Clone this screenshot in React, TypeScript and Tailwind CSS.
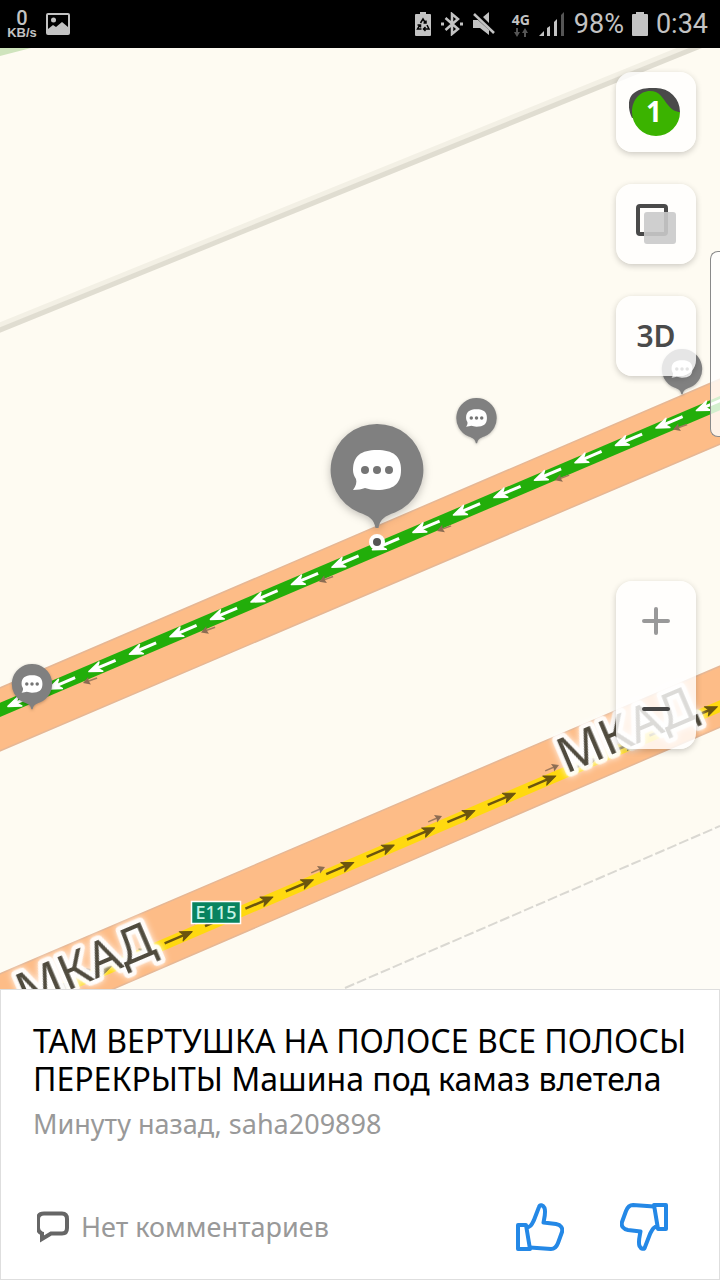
import type { ReactNode } from "react";

const range = (from: number, to: number) =>
  Array.from({ length: to - from + 1 }, (_, i) => from + i);

interface PinProps {
  x: number;
  y: number;
  scale?: number;
}

function Pin({ x, y, scale = 1 }: PinProps) {
  return (
    <g
      transform={`translate(${x} ${y}) scale(${scale})`}
      className="drop-shadow-[0_2px_4px_rgba(0,0,0,0.25)]"
    >
      <path
        d="M0 -46A46 46 0 0 1 18 42.500C8 46 3 49 1.500 58H-1.500C-3 49 -8 46 -18 42.500A46 46 0 0 1 0 -46Z"
        fill="#808080"
      />
      <path
        d="M0 -20C16 -20 24 -14 24 0S16 20 0 20C-5 20 -8 19 -12 18C-15 19 -19 20 -24 20C-21 16 -20 12 -21 9C-23 6 -24 3 -24 0C-24 -14 -16 -20 0 -20Z"
        fill="#fff"
      />
      <g fill="#757575">
        <circle cx="-12" cy="0" r="4" />
        <circle cx="0" cy="0" r="4" />
        <circle cx="12" cy="0" r="4" />
      </g>
    </g>
  );
}

function RoadName({ x, y }: { x: number; y: number }) {
  return (
    <text
      transform={`translate(${x} ${y}) rotate(-23)`}
      className="font-['Noto_Sans',sans-serif] text-[50px] drop-shadow-[0_0_3px_#fff]"
      fill="#504b3e"
      stroke="#fff"
      strokeOpacity="0.85"
      strokeWidth="9"
      strokeLinejoin="round"
      paintOrder="stroke"
    >
      МКАД
    </text>
  );
}

function MapCanvas() {
  return (
    <svg
      viewBox="0 48 720 941"
      preserveAspectRatio="xMidYMid slice"
      className="absolute inset-0 h-full w-full"
    >
      <path d="M0 48H31L0 56Z" fill="#cfe4bd" />
      <path d="M-5 327L725 31" stroke="#f3f0e5" strokeWidth="5" />
      <path d="M-5 332L725 36" stroke="#e0ddd1" strokeWidth="5" />

      {/* dashed boundary */}
      <path d="M345 988L720 826V989H345Z" fill="#fefcf6" />
      <path d="M345 988L720 826" stroke="#dad8d2" strokeWidth="2" strokeDasharray="10 3" />

      {/* upper carriageway */}
      <path d="M-5 690L725 377V442L-5 753Z" fill="#fdbc87" stroke="#e6b795" strokeWidth="1.500" />
      <path d="M-5 712L725 401" stroke="#22ae0a" strokeWidth="13" />
      {range(-12, 5).map((k) => (
        <g
          key={k}
          transform={`translate(${493 + k * 40.5} ${498 - k * 17.4}) rotate(-23)`}
          stroke="#fff"
          fill="none"
        >
          <path d="M6 0H30" strokeWidth="3" />
          <path d="M1 0L14 -5L10 0L14 5Z" fill="#fff" strokeWidth="1.500" strokeLinejoin="round" />
        </g>
      ))}
      {range(-3, 2).map((k) => (
        <g key={k} transform={`translate(${437 + k * 118} ${531 - k * 50.7}) rotate(-20)`}>
          <path d="M4 0H15" stroke="#a07a5c" strokeWidth="1.500" />
          <path d="M0 0L7 -4L6 0L7 4Z" fill="#8c6c52" />
        </g>
      ))}

      {/* lower carriageway */}
      <path d="M-5 976L725 664V725L-5 1040Z" fill="#fdbc87" stroke="#e6b795" strokeWidth="1.500" />
      <path d="M-5 1017L725 704" stroke="#ffd90f" strokeWidth="11" />
      {range(-5, 11).map((k) => (
        <g
          key={k}
          transform={`translate(${273 + k * 40.4} ${897 - k * 17.3}) rotate(-23)`}
          stroke="#6b550f"
        >
          <path d="M-30 0H-4" strokeWidth="2.500" />
          <path d="M0 0L-12 -5L-9 0L-12 5Z" fill="#6b550f" strokeLinejoin="round" />
        </g>
      ))}
      {range(-2, 2).map((k) => (
        <g key={k} transform={`translate(${325 + k * 117} ${867 - k * 51}) rotate(-23)`}>
          <path d="M-15 0H-4" stroke="#a07a5c" strokeWidth="1.500" />
          <path d="M0 0L-7 -4L-6 0L-7 4Z" fill="#8c6c52" />
        </g>
      ))}

      <RoadName x={25} y={1009} />
      <RoadName x={566} y={774} />

      <rect x="191.500" y="901.500" width="49" height="22" fill="#08835f" stroke="#fff" strokeWidth="1.500" />
      <text
        x="216"
        y="919"
        textAnchor="middle"
        fill="#c5f3e4"
        className="font-['Noto_Sans',sans-serif] text-[18px] font-medium"
      >
        E115
      </text>

      <circle cx="377" cy="542" r="6" fill="#555" stroke="#fff" strokeWidth="4" />
      <Pin x={377} y={470} />
      <Pin x={476.5} y={418} scale={0.435} />
      <Pin x={32} y={684} scale={0.435} />
      <Pin x={682} y={369} scale={0.435} />
    </svg>
  );
}

function MapButton({ label, children }: { label: string; children: ReactNode }) {
  return (
    <button
      aria-label={label}
      className="grid size-20 place-items-center rounded-2xl bg-white/80 shadow-[0_2px_6px_rgba(0,0,0,0.2)]"
    >
      {children}
    </button>
  );
}

function StatusBar() {
  return (
    <header className="flex h-12 items-center justify-between bg-black px-2 text-[#c3c3c3]">
      <div className="flex items-center gap-2.5">
        <div className="flex w-7 flex-col items-center font-['Liberation_Sans',sans-serif] font-bold">
          <span className="font-[Roboto,sans-serif] text-xl leading-[18px] font-medium">0</span>
          <span className="text-[13px] leading-3">KB/s</span>
        </div>
        <svg viewBox="0 0 24 22" className="h-[22px] w-6">
          <rect x="1" y="1" width="22" height="20" rx="1" fill="none" stroke="currentColor" strokeWidth="2" />
          <circle cx="7.500" cy="7" r="2.500" fill="currentColor" />
          <path d="M2 16L7 12L10 14L16 9L22 14V21H2Z" fill="currentColor" />
        </svg>
      </div>

      <div className="flex items-center font-[Roboto,sans-serif] text-[27px] leading-8">
        {/* battery saver */}
        <svg viewBox="0 0 16 24" className="mr-2.5 h-6 w-4">
          <path d="M5 0H11V2H15Q16 2 16 3V23Q16 24 15 24H1Q0 24 0 23V3Q0 2 1 2H5Z" fill="currentColor" />
          <g fill="none" stroke="#000" strokeWidth="1.500">
            <path d="M5.500 11L8 7L10.500 11M8.500 11H11V8.500" />
            <path d="M12 13L14 17H9M10.500 15L8.500 17L10.500 19" />
            <path d="M6.500 17H2.500L5 12.500M2.500 13H5.500V15.500" />
          </g>
        </svg>
        {/* bluetooth */}
        <svg viewBox="0 0 22 24" className="mr-2.5 h-6 w-[22px]" fill="none" stroke="currentColor" strokeWidth="2.500">
          <path d="M4.500 6L17 17L11 22V2L17 7L4.500 18" />
          <path d="M0 12H3M19 12H22" strokeWidth="3" />
        </svg>
        {/* sound off */}
        <svg viewBox="0 0 22 24" className="mr-4 h-6 w-[22px]">
          <path d="M0 8H5L16 18V23L7 16H0ZM10 5L16 0V11Z" fill="currentColor" />
          <path d="M1 2L21 21" stroke="currentColor" strokeWidth="2.500" />
        </svg>
        <div className="mr-2 flex w-5 flex-col items-center">
          <span className="font-['Open_Sans',sans-serif] text-sm leading-4 font-bold">4G</span>
          <svg viewBox="0 0 14 9" className="h-[9px] w-3.5" fill="#555">
            <path d="M2 0H4V4H6L3 9L0 4H2Z" />
            <path d="M10 9H12V5H14L11 0L8 5H10Z" />
          </svg>
        </div>
        <svg viewBox="0 0 25 24" className="mr-2.5 h-6 w-[25px]" fill="currentColor">
          <path d="M0 24L5 19V24Z" />
          <path d="M8 16L11 14V24H8Z" />
          <path d="M15 10L18 7V24H15Z" />
          <path d="M22 3L25 0V24H22Z" fill="#555" />
        </svg>
        <span className="mr-2">98%</span>
        <svg viewBox="0 0 16 24" className="mr-2 h-6 w-4">
          <path d="M4 0H12V2H15Q16 2 16 3V23Q16 24 15 24H1Q0 24 0 23V3Q0 2 1 2H4Z" fill="currentColor" />
        </svg>
        <span className="mr-1">0:34</span>
      </div>
    </header>
  );
}

function ThumbIcon({ className = "" }: { className?: string }) {
  return (
    <svg
      viewBox="0 0 48 48"
      className={`size-12 ${className}`}
      fill="none"
      stroke="#2488e6"
      strokeWidth="4"
      strokeLinejoin="round"
    >
      <path d="M2 22H10L14 46H2Z" />
      <path d="M10 24.500C15 24.500 16 21 18 17L23 4C24 1 27 2 28.500 5C30 9 28.500 14 27.500 19.500L40 21C45 22 47 25 46 29L42 40C40.500 44 39 46 35 46L14 44.500" />
    </svg>
  );
}

export default function App() {
  return (
    <div className="flex min-h-screen flex-col bg-white font-['Noto_Sans',sans-serif]">
      <StatusBar />

      <main className="relative min-h-160 flex-1 overflow-hidden bg-[#fefbf2]">
        <MapCanvas />

        <div className="absolute top-6 right-6 flex flex-col gap-8">
          <MapButton label="Пробки">
            <svg viewBox="629 86 54 52" className="h-[52px] w-[54px]">
              <path
                d="M632 118C628 110 627 98 634 93C642 87 650 88 656 88A24 24 0 0 1 680 112Z"
                fill="#4a4a4a"
              />
              <path
                d="M680 112A24 24 0 0 1 632 112C632 100 640 91 650 91C660 91 663 99 668 105C672 110 676 112 680 112Z"
                fill="#3bb300"
              />
              <text x="654" y="122" textAnchor="middle" fill="#fff" className="text-[28px] font-bold">
                1
              </text>
            </svg>
          </MapButton>
          <MapButton label="Слои">
            <svg viewBox="0 0 40 40" className="size-10">
              <rect x="2" y="2" width="28" height="28" rx="2" fill="none" stroke="#4a4a4a" strokeWidth="4" />
              <rect x="8" y="8" width="32" height="32" rx="3" fill="#cacaca" fillOpacity="0.9" />
            </svg>
          </MapButton>
          <MapButton label="3D">
            <span className="text-[30px] leading-10 font-semibold text-[#4a4a4a]">3D</span>
          </MapButton>
        </div>

        {/* edge panel handle */}
        <div className="absolute top-[203px] right-0 h-[186px] w-2.5 rounded-l-lg border border-r-0 border-[#8a8a8a] bg-white/80" />

        <div className="absolute right-6 bottom-60 flex h-42 w-20 flex-col justify-between rounded-2xl bg-white/80 shadow-[0_2px_6px_rgba(0,0,0,0.2)]">
          <button aria-label="Приблизить" className="grid size-20 place-items-center">
            <svg viewBox="0 0 28 28" className="size-7" stroke="#999" strokeWidth="4" strokeLinecap="round">
              <path d="M2 14H26M14 2V26" />
            </svg>
          </button>
          <button aria-label="Отдалить" className="grid size-20 place-items-center">
            <svg viewBox="0 0 28 28" className="size-7" stroke="#454545" strokeWidth="4" strokeLinecap="round">
              <path d="M2 14H26" />
            </svg>
          </button>
        </div>
      </main>

      <section className="border border-[#dedede] bg-white px-8 pt-8 pb-7">
        <h1 className="text-[32px] leading-[38px] text-black">
          ТАМ ВЕРТУШКА НА ПОЛОСЕ ВСЕ ПОЛОСЫ ПЕРЕКРЫТЫ Машина под камаз влетела
        </h1>
        <p className="mt-2 text-[27px] leading-9 text-[#999]">Минуту назад, saha209898</p>

        <div className="mt-[61px] flex items-center justify-between">
          <a href="#comments" className="flex items-center gap-2.5 pl-1 text-[27px] leading-9 text-[#999]">
            <svg viewBox="1 0 34 32" className="h-8 w-[34px]" fill="none" stroke="#666" strokeWidth="4">
              <path d="M8 2.500H26Q31 2.500 31 8V17Q31 22.500 26 22.500H15L6 28V22.500Q2 21 2 17V8Q2 2.500 8 2.500Z" />
            </svg>
            Нет комментариев
          </a>
          <div className="flex gap-14 pr-[19px]">
            <button aria-label="Нравится">
              <ThumbIcon />
            </button>
            <button aria-label="Не нравится">
              <ThumbIcon className="rotate-180" />
            </button>
          </div>
        </div>
      </section>
    </div>
  );
}
